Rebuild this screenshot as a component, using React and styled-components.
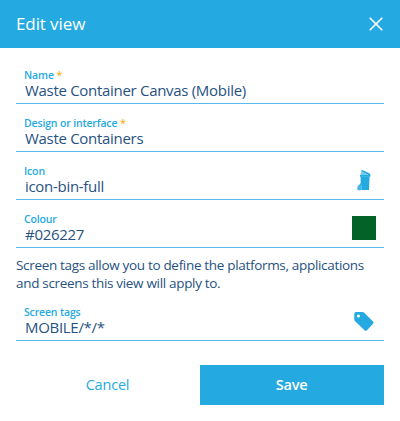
import React from 'react'
import styled, { createGlobalStyle } from 'styled-components'

const GlobalStyle = createGlobalStyle`
  :root {
    --primary: #25a9e1;
    --text: #27527f;
    --line: #58bce8;
    --required: #fbae2c;
    --white: #fff;
  }

  * {
    box-sizing: border-box;
  }

  body {
    margin: 0;
    background: var(--white);
    color: var(--text);
    font-family: 'Open Sans', 'Noto Sans', sans-serif;
  }
`

const Dialog = styled.div`
  width: 400px;
  height: 421px;
  background: var(--white);
`

const Header = styled.header`
  display: flex;
  align-items: center;
  justify-content: space-between;
  height: 48px;
  padding: 0 16px;
  background: var(--primary);
  color: var(--white);
`

const Title = styled.h1`
  margin: 0;
  font-size: 17px;
  font-weight: 400;
  line-height: 24px;
  letter-spacing: -0.1px;
`

const CloseButton = styled.button`
  display: flex;
  padding: 0;
  border: 0;
  background: none;
  color: inherit;
`

const Form = styled.div`
  padding: 8px 16px 0;
`

const Field = styled.div`
  display: flex;
  align-items: flex-start;
  justify-content: space-between;
  height: 48px;
  padding: 0 8px;
  border-bottom: 1px solid var(--line);
`

const FieldText = styled.div`
  padding-top: 11px;
`

const Label = styled.div`
  height: 15px;
  color: var(--primary);
  font-size: 10.5px;
  font-weight: 600;
  line-height: 16px;
  letter-spacing: -0.15px;
`

const Required = styled.span`
  color: var(--required);
`

const Value = styled.div`
  padding-left: 1px;
  font-size: 15px;
  line-height: 16px;
  letter-spacing: -0.3px;
`

const Swatch = styled.div`
  width: 24px;
  height: 24px;
  background: ${({ color }) => color};
`

const IconBox = styled.div`
  display: flex;
  align-items: center;
  justify-content: center;
  width: 24px;
  height: 24px;
  margin-top: 16px;
  color: var(--primary);
`

const Hint = styled.p`
  margin: 0;
  padding: 8px 0 0;
  height: 45px;
  font-size: 13.5px;
  line-height: 18px;
  letter-spacing: -0.32px;
`

const Actions = styled.div`
  display: flex;
  padding-top: 24px;
`

const Button = styled.button`
  flex: 1;
  height: 40px;
  padding: 0 1px 1px 0;
  border: 0;
  background: ${({ $primary }) => ($primary ? 'var(--primary)' : 'transparent')};
  color: ${({ $primary }) => ($primary ? 'var(--white)' : 'var(--primary)')};
  font-family: inherit;
  font-size: 14.5px;
  font-weight: ${({ $primary }) => ($primary ? 550 : 400)};
  letter-spacing: -0.2px;
`

const CloseIcon = () => (
  <svg width="16" height="16" viewBox="0 0 16 16" fill="none" stroke="currentColor" strokeWidth="1.6">
    <path d="M1.7 1.7 14.3 14.3M14.3 1.7 1.7 14.3" />
  </svg>
)

const BinIcon = () => (
  <svg width="24" height="24" viewBox="0 0 24 24" fill="currentColor">
    <path d="M9.2 2.2h1.6l7 3.4.8 2-.6.2-8.6-4.2z" />
    <path d="m8.3 6.8 1-3 4.2 1.6 3 2v.4H8.3z" opacity=".6" />
    <path d="M8 7h10.2v1.8H8z" />
    <path d="M8.6 8.4h9L17 22H8.8z" />
    <path d="M5.2 20.6c0-2 .8-3 1.6-3.6l2.2-2v7.2H5.6z" opacity=".85" />
    <path d="M9.6 17.2 9.2 22" stroke="#fff" strokeWidth=".5" opacity=".6" />
  </svg>
)

const TagIcon = () => (
  <svg width="24" height="24" viewBox="0 0 24 24">
    <path
      fill="currentColor"
      d="M4.2 3h6.3c.6 0 1 .2 1.5.6l9 8.8c.8.8.8 1.5 0 2.3l-6 6.5c-.8.8-1.7.8-2.5 0l-9.6-9.3c-.4-.4-.6-.8-.6-1.4V4.9C2.3 3.8 3.1 3 4.2 3z"
    />
    <circle cx="6.4" cy="7" r="1.6" fill="#fff" />
  </svg>
)

const FormField = ({ label, value, required, children }) => (
  <Field>
    <FieldText>
      <Label>
        {label} {required && <Required>*</Required>}
      </Label>
      <Value>{value}</Value>
    </FieldText>
    {children}
  </Field>
)

const App = () => {
  return (
    <>
      <GlobalStyle />
      <Dialog>
        <Header>
          <Title>Edit view</Title>
          <CloseButton aria-label="Close">
            <CloseIcon />
          </CloseButton>
        </Header>
        <Form>
          <FormField label="Name" value="Waste Container Canvas (Mobile)" required />
          <FormField label="Design or interface" value="Waste Containers" required />
          <FormField label="Icon" value="icon-bin-full">
            <IconBox>
              <BinIcon />
            </IconBox>
          </FormField>
          <FormField label="Colour" value="#026227">
            <IconBox>
              <Swatch color="#026227" />
            </IconBox>
          </FormField>
          <Hint>
            Screen tags allow you to define the platforms, applications and screens this view will apply to.
          </Hint>
          <FormField label="Screen tags" value="MOBILE/*/*">
            <IconBox>
              <TagIcon />
            </IconBox>
          </FormField>
          <Actions>
            <Button>Cancel</Button>
            <Button $primary>Save</Button>
          </Actions>
        </Form>
      </Dialog>
    </>
  )
}

export default App
